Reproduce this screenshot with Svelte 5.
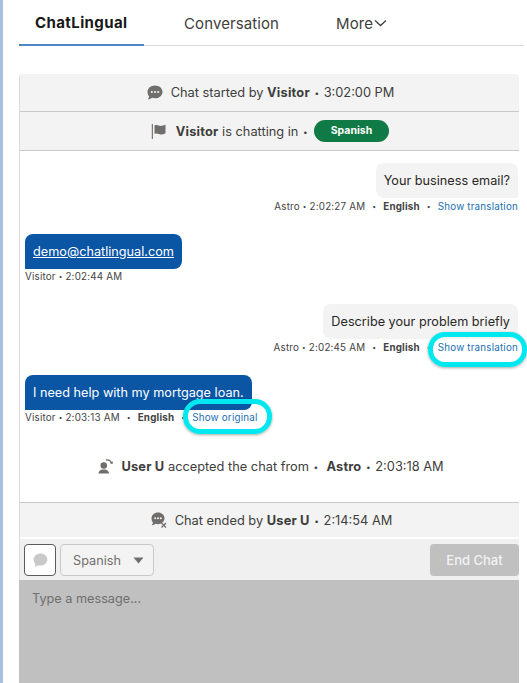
<script lang="ts">
	const tabs = [
		{ label: 'ChatLingual', active: true },
		{ label: 'Conversation', active: false }
	];
</script>

<div class="page">
	<nav class="tabs">
		{#each tabs as tab}
			<div class="tab" class:active={tab.active}>{tab.label}</div>
		{/each}
		<div class="tab more">
			More<svg width="13" height="8" viewBox="0 0 13 8"><path d="M1 1.500l5.500 5 5.500-5" fill="none" stroke="#3e3e3c" stroke-width="1.300" /></svg>
		</div>
	</nav>

	<section class="panel">
		<div class="event-bar first">
			<svg class="icon" width="16" height="15" viewBox="0 0 16 15">
				<path d="M8 .5c4.200 0 7.500 2.800 7.500 6.400s-3.300 6.400-7.500 6.400c-1 0-2-.2-2.900-.5C4 13.600 2.300 14.500.8 14.300c.8-.8 1.300-1.900 1.300-3C1 10 .5 8.500.5 6.900.5 3.300 3.800.5 8 .5z" fill="#706e6b" />
				<circle cx="4.800" cy="7" r="1.100" fill="#f3f3f3" /><circle cx="8" cy="7" r="1.100" fill="#f3f3f3" /><circle cx="11.200" cy="7" r="1.100" fill="#f3f3f3" />
			</svg>
			<span>Chat started by <b>Visitor</b> <i class="dot">•</i> 3:02:00 PM</span>
		</div>
		<div class="event-bar second">
			<svg class="icon flag" width="15" height="15" viewBox="0 0 15 15">
				<path d="M.8 0h1.100v15H.8z" fill="#706e6b" />
				<path d="M3.500 1.500c3-1.300 4.500 1 7.500.3 1.200-.3 2.500-.5 3.500-1v8.500c-1 .6-2.300.8-3.500 1.100-3 .6-4.500-1.700-7.500-.4z" fill="#706e6b" />
			</svg>
			<span><b>Visitor</b> is chatting in <i class="dot">•</i></span>
			<span class="pill">Spanish</span>
		</div>

		<div class="messages">
			<div class="msg agent">
				<div class="bubble">Your business email?</div>
				<div class="meta">Astro <i class="dot">•</i> 2:02:27 AM <i class="sep">•</i> <b>English</b> <i class="sep">•</i> <a href="#top">Show translation</a></div>
			</div>
			<div class="msg visitor">
				<div class="bubble"><a href="#top">demo@chatlingual.com</a></div>
				<div class="meta">Visitor <i class="dot">•</i> 2:02:44 AM</div>
			</div>
			<div class="msg agent">
				<div class="bubble">Describe your problem briefly</div>
				<div class="meta">Astro <i class="dot">•</i> 2:02:45 AM <i class="sep">•</i> <b>English</b> <i class="sep">•</i> <a class="ringed wide" href="#top">Show translation</a></div>
			</div>
			<div class="msg visitor">
				<div class="bubble">I need help with my mortgage loan.</div>
				<div class="meta">Visitor <i class="dot">•</i> 2:03:13 AM <i class="sep">•</i> <b>English</b> <i class="sep">•</i> <a class="ringed" href="#top">Show original</a></div>
			</div>
			<div class="transfer">
				<svg class="icon" width="15" height="15" viewBox="0 0 15 15">
					<circle cx="5.800" cy="6.500" r="3.300" fill="#706e6b" />
					<path d="M.5 14.500c0-2.500 2-3.500 3.500-4h3.500c1.500.5 3.500 1.500 3.500 4z" fill="#706e6b" />
					<path d="M8 1c2.500-.6 4.500.5 5.500 3" fill="none" stroke="#706e6b" stroke-width="1.300" />
					<path d="M11.800 4l2.700 1.300.4-3z" fill="#706e6b" />
				</svg>
				<span><b>User U</b> accepted the chat from <i class="dot">•</i> &nbsp;<b>Astro</b> <i class="dot">•</i> 2:03:18 AM</span>
			</div>
		</div>

		<div class="event-bar ended">
			<svg class="icon" width="16" height="16" viewBox="0 0 16 16">
				<path d="M7 .5c3.600 0 6.500 2.600 6.500 5.800 0 3.300-2.900 5.900-6.500 5.900-.8 0-1.700-.1-2.500-.4-.9.800-2.400 1.500-3.700 1.300.7-.7 1.100-1.700 1.100-2.700C1 9.300.5 7.800.5 6.300.5 3.100 3.400.5 7 .5z" fill="#706e6b" />
				<circle cx="4.200" cy="6.300" r="1" fill="#f3f3f3" /><circle cx="7" cy="6.300" r="1" fill="#f3f3f3" /><circle cx="9.800" cy="6.300" r="1" fill="#f3f3f3" />
				<path d="M10.500 11l4.500 4.500m0-4.500l-4.500 4.500" stroke="#706e6b" stroke-width="1.300" />
			</svg>
			<span>Chat ended by <b>User U</b> <i class="dot">•</i> 2:14:54 AM</span>
		</div>

		<div class="toolbar">
			<button class="icon-btn" aria-label="Quick text">
				<svg width="15" height="14" viewBox="0 0 15 14">
					<path d="M7.500.5c3.800 0 6.900 2.700 6.900 6s-3.100 6-6.900 6c-.8 0-1.600-.1-2.300-.3C4.300 13 2.800 13.600 1.500 13.400c.6-.7 1-1.500 1-2.500C1.300 9.800.6 8.200.6 6.500c0-3.300 3.100-6 6.900-6z" fill="#c9c9c9" />
				</svg>
			</button>
			<div class="lang-select">
				<span>Spanish</span>
				<svg width="11" height="7" viewBox="0 0 11 7"><path d="M.5.5h10L5.500 6.500z" fill="#706e6b" /></svg>
			</div>
			<button class="end-chat">End Chat</button>
		</div>
		<div class="composer">Type a message...</div>
	</section>
</div>

<style>
	:global(body) {
		margin: 0;
		background: #fff;
	}

	.page {
		box-sizing: border-box;
		width: 527px;
		height: 683px;
		overflow: hidden;
		padding: 0 3px 0 16px;
		border-left: 3px solid #a8c0dd;
		font-family: Inter, 'Liberation Sans', sans-serif;
		font-size: 12.700px;
		color: #3e3e3c;
	}

	.tabs {
		display: flex;
		height: 46px;
		box-sizing: border-box;
		border-bottom: 1px solid #dddbda;
		margin-bottom: 28px;
		font-size: 15px;
	}

	.tab {
		display: flex;
		align-items: center;
		height: 46px;
		box-sizing: border-box;
		padding: 0 16px;
		color: #3e3e3c;
		letter-spacing: 0.1px;
	}

	.tab.active {
		width: 125px;
		font-weight: 700;
		letter-spacing: 0.4px;
		color: #181818;
		border-bottom: 2px solid #4f86c0;
		margin-right: 24px;
	}

	.tab.more {
		gap: 1px;
		padding-left: 0;
		margin-left: 41px;
	}

	.tab:nth-child(2) {
		padding: 0 16px;
	}

	.panel {
		width: 500px;
		height: 609px;
		box-sizing: border-box;
		border-left: 1px solid #dddbda;
		border-radius: 4px 4px 0 0;
		background: #fff;
	}

	.event-bar {
		display: flex;
		align-items: center;
		justify-content: center;
		gap: 8px;
		box-sizing: border-box;
		font-size: 12.800px;
		background: #f3f3f3;
		border-bottom: 1px solid #c9c9c9;
	}

	.event-bar.first {
		height: 38px;
		padding: 0 0 1px 2px;
		border-radius: 4px 4px 0 0;
	}

	.event-bar.second {
		height: 39px;
		gap: 4px;
		padding-left: 1px;
	}

	.event-bar.second .flag {
		margin-right: 6px;
	}

	.event-bar.ended {
		height: 35px;
		padding-left: 4px;
		border-top: 1px solid #c9c9c9;
		border-bottom: 0;
	}

	.dot {
		font-style: normal;
		font-size: 0.65em;
		vertical-align: 1px;
		margin: 0 1px;
	}

	.sep {
		font-style: normal;
		font-size: 0.7em;
		vertical-align: 1px;
		margin: 0 4px;
	}

	.pill {
		font-size: 10.500px;
		font-weight: 700;
		color: #fff;
		background: #107a46;
		border-radius: 11px;
		padding: 0 17px;
		height: 22px;
		line-height: 22px;
		margin-left: 1px;
	}

	.messages {
		height: 351px;
		box-sizing: border-box;
		padding: 12px 1px 0 5px;
		display: flex;
		flex-direction: column;
		background: #fff;
	}

	.msg {
		display: flex;
		flex-direction: column;
	}

	.msg.agent {
		align-items: flex-end;
		margin-bottom: 20px;
	}

	.msg.visitor {
		align-items: flex-start;
		margin-bottom: 20px;
	}

	.bubble {
		box-sizing: border-box;
		height: 35px;
		line-height: 35px;
		padding: 0 8px;
		border-radius: 8px;
	}

	.agent .bubble {
		background: #f3f3f3;
		color: #2b2826;
		border-bottom-right-radius: 0;
	}

	.visitor .bubble {
		background: #0a56a5;
		color: #fff;
		border-bottom-left-radius: 0;
	}

	.visitor .bubble a {
		color: #fff;
	}

	.meta {
		font-size: 9.800px;
		line-height: 14px;
		letter-spacing: 0.2px;
		margin-top: 1px;
		color: #444;
		white-space: nowrap;
	}

	.agent .meta {
		margin-top: 2px;
	}

	.meta .dot {
		margin: 0;
	}

	.meta a {
		color: #1b6fb0;
		text-decoration: none;
		position: relative;
	}

	.ringed::after {
		content: '';
		position: absolute;
		left: -9px;
		right: -14px;
		top: -13px;
		bottom: -11px;
		border: 5px solid #00e8ef;
		border-radius: 17px;
		box-shadow: 0 1px 3px rgba(0, 0, 0, 0.35);
	}

	.ringed.wide::after {
		left: -10px;
		right: -9px;
		top: -10px;
		bottom: -14px;
	}

	.transfer {
		display: flex;
		align-items: center;
		justify-content: center;
		gap: 8px;
		margin-top: 14px;
		padding-right: 1px;
		font-size: 12.800px;
	}

	.toolbar {
		display: flex;
		align-items: center;
		gap: 4px;
		height: 41px;
		margin-top: 2px;
		padding: 0 0 0 4px;
		box-sizing: border-box;
		background: #f0f0f0;
	}

	.icon-btn {
		display: flex;
		align-items: center;
		justify-content: center;
		width: 32px;
		height: 32px;
		padding: 0;
		background: #fff;
		border: 1px solid #5c5c5c;
		border-radius: 4px;
	}

	.lang-select {
		display: flex;
		align-items: center;
		justify-content: space-between;
		box-sizing: border-box;
		width: 94px;
		height: 32px;
		padding: 1px 9px 0 12px;
		border: 1px solid #c9c9c9;
		border-radius: 4px;
		background: #f3f3f3;
		color: #706e6b;
	}

	.end-chat {
		margin-left: auto;
		width: 89px;
		height: 32px;
		border: 0;
		border-radius: 4px;
		background: #c0c0c0;
		color: #f3f3f3;
		font-family: inherit;
		font-size: 13px;
		font-weight: 500;
	}

	.composer {
		height: 103px;
		box-sizing: border-box;
		margin-left: -1px;
		padding: 11px 13px;
		background: #c0c0c0;
		color: #6f6f6f;
	}

	b {
		font-weight: 700;
		letter-spacing: 0.2px;
	}
</style>
